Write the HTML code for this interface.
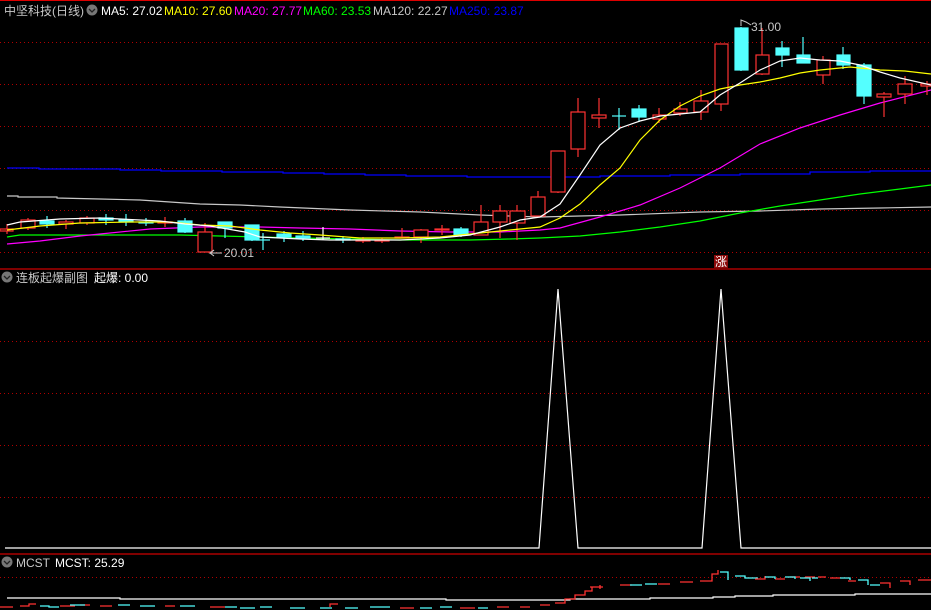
<!DOCTYPE html>
<html><head><meta charset="utf-8"><style>
html,body{margin:0;padding:0;background:#000;width:931px;height:610px;overflow:hidden}
svg{display:block}
text{font-family:"Liberation Sans","Noto Sans CJK SC",sans-serif;font-size:12px}
</style></head><body>
<svg width="931" height="610" viewBox="0 0 931 610" xmlns="http://www.w3.org/2000/svg">
<rect width="931" height="610" fill="#000"/>
<line x1="0" y1="0.5" x2="931" y2="0.5" stroke="#d00" stroke-width="1"/>
<!-- grid -->
<g stroke="#b00000" stroke-width="1" stroke-dasharray="1,3">
<line x1="0" y1="42.5" x2="931" y2="42.5"/>
<line x1="0" y1="84.5" x2="931" y2="84.5"/>
<line x1="0" y1="126.5" x2="931" y2="126.5"/>
<line x1="0" y1="168.5" x2="931" y2="168.5"/>
<line x1="0" y1="210.5" x2="931" y2="210.5"/>
<line x1="0" y1="252.5" x2="931" y2="252.5"/>
<line x1="0" y1="341.5" x2="931" y2="341.5"/>
<line x1="0" y1="393.5" x2="931" y2="393.5"/>
<line x1="0" y1="445.5" x2="931" y2="445.5"/>
<line x1="0" y1="497.5" x2="931" y2="497.5"/>
<line x1="0" y1="577.5" x2="931" y2="577.5"/>
</g>
<line x1="0" y1="269" x2="931" y2="269" stroke="#c00" stroke-width="1.2"/>
<line x1="0" y1="554" x2="931" y2="554" stroke="#c00" stroke-width="1.2"/>

<!-- blue MA250 -->
<polyline fill="none" stroke="#0000ff" stroke-width="1.3" points="7,168 39,168 39,169 120,169 120,170 161,170 161,171 222,171 222,172 283,172 283,173 324,173 324,174 365,174 365,175 406,175 406,176 467,176 467,177 600,177 600,176 670,176 670,175 740,175 740,174 810,174 810,172 870,172 870,171 931,171"/>
<!-- grey MA120 -->
<polyline fill="none" stroke="#c8c8c8" stroke-width="1.2" points="7,196 18,196 18,197 57,197 57,198 100,199 140,200 200,204 240,205 280,207 350,210 420,212 480,215 540,217 620,215 700,212 760,211 820,209 880,208 931,207"/>
<!-- green MA60 -->
<polyline fill="none" stroke="#00ff00" stroke-width="1.2" points="7,237 20,235 180,235 260,237 300,238 400,240 470,240 510,239 540,238 580,236 620,232 660,227 700,221 740,213 780,206 820,200 860,194 900,189 931,185"/>
<!-- magenta MA20 -->
<polyline fill="none" stroke="#ff00ff" stroke-width="1.2" points="7,244 40,241 80,236 100,234 150,229 175,228 200,227 260,227 300,228 350,229 400,231 450,232 500,232 540,230 560,228 600,217 640,205 680,188 720,168 760,144 800,128 840,115 880,103 931,90"/>

<!-- candles -->
<g stroke-width="1.2">
<!-- red hollow -->
<g stroke="#ff3232" fill="#000">
<line x1="7" y1="224" x2="7" y2="234"/><rect x="0" y="229" width="13" height="2"/>
<line x1="28" y1="218" x2="28" y2="230"/><rect x="21" y="220" width="14" height="8"/>
<line x1="66" y1="220" x2="66" y2="229"/><rect x="59" y="222" width="14" height="2"/>
<line x1="87" y1="216" x2="87" y2="225"/><rect x="80" y="218" width="14" height="5"/>
<line x1="165" y1="217" x2="165" y2="227"/><rect x="158" y="222" width="14" height="1"/>
<line x1="205" y1="223" x2="205" y2="252"/><rect x="198" y="232" width="14" height="20"/>
<line x1="363" y1="237" x2="363" y2="243"/><rect x="356" y="240" width="14" height="1"/>
<line x1="382" y1="238" x2="382" y2="243"/><rect x="375" y="240" width="14" height="1"/>
<line x1="402" y1="228" x2="402" y2="238"/><rect x="395" y="237" width="14" height="1"/>
<line x1="421" y1="229" x2="421" y2="243"/><rect x="414" y="230" width="14" height="7"/>
<line x1="442" y1="225" x2="442" y2="235"/><rect x="435" y="229" width="14" height="1"/>
<line x1="481" y1="205" x2="481" y2="235"/><rect x="474" y="222" width="14" height="13"/>
<line x1="500" y1="205" x2="500" y2="238"/><rect x="493" y="211" width="14" height="11"/>
<line x1="517" y1="205" x2="517" y2="240"/><rect x="510" y="211" width="15" height="12"/>
<line x1="538" y1="191" x2="538" y2="216"/><rect x="531" y="197" width="14" height="19"/>
<line x1="558" y1="151" x2="558" y2="193"/><rect x="551" y="151" width="14" height="41"/>
<line x1="578" y1="98" x2="578" y2="157"/><rect x="571" y="112" width="14" height="37"/>
<line x1="599" y1="98" x2="599" y2="128"/><rect x="592" y="115" width="14" height="3"/>
<line x1="659" y1="108" x2="659" y2="123"/><rect x="653" y="115" width="13" height="4"/>
<line x1="680" y1="102" x2="680" y2="116"/><rect x="674" y="109" width="13" height="4"/>
<line x1="701" y1="90" x2="701" y2="120"/><rect x="694" y="101" width="14" height="11"/>
<line x1="721" y1="44" x2="721" y2="111"/><rect x="715" y="44" width="13" height="60"/>
<line x1="762" y1="28" x2="762" y2="75"/><rect x="756" y="55" width="13" height="19"/>
<line x1="823" y1="56" x2="823" y2="84"/><rect x="817" y="60" width="13" height="15"/>
<line x1="884" y1="92" x2="884" y2="117"/><rect x="877" y="94" width="14" height="3"/>
<line x1="905" y1="76" x2="905" y2="104"/><rect x="898" y="84" width="14" height="10"/>
<line x1="927" y1="81" x2="927" y2="95"/><rect x="921" y="84" width="12" height="2"/>
</g>
<!-- cyan filled -->
<g stroke="#54ffff" fill="#54ffff">
<line x1="47" y1="216" x2="47" y2="228"/><rect x="40" y="221" width="14" height="3"/>
<line x1="106" y1="214" x2="106" y2="225"/><rect x="99" y="218" width="14" height="2"/>
<line x1="126" y1="214" x2="126" y2="226"/><rect x="119" y="220" width="14" height="2"/>
<line x1="146" y1="218" x2="146" y2="226"/><rect x="139" y="222" width="14" height="1"/>
<line x1="185" y1="218" x2="185" y2="233"/><rect x="178" y="221" width="14" height="11"/>
<line x1="225" y1="222" x2="225" y2="238"/><rect x="218" y="222" width="14" height="6"/>
<line x1="252" y1="225" x2="252" y2="241"/><rect x="245" y="225" width="14" height="15"/>
<line x1="263" y1="233" x2="263" y2="250"/><line x1="256" y1="240" x2="270" y2="240"/>
<line x1="284" y1="231" x2="284" y2="242"/><rect x="277" y="234" width="14" height="3"/>
<line x1="303" y1="231" x2="303" y2="241"/><rect x="296" y="236" width="14" height="2"/>
<line x1="343" y1="236" x2="343" y2="243"/><rect x="336" y="239" width="14" height="1"/>
<line x1="461" y1="227" x2="461" y2="237"/><rect x="454" y="229" width="14" height="6"/>
<line x1="619" y1="108" x2="619" y2="130"/><line x1="612" y1="116" x2="626" y2="116"/>
<line x1="639" y1="105" x2="639" y2="122"/><rect x="632" y="109" width="14" height="8"/>
<line x1="741" y1="27" x2="741" y2="71"/><rect x="735" y="28" width="13" height="42"/>
<line x1="782" y1="41" x2="782" y2="67"/><rect x="776" y="48" width="13" height="7"/>
<line x1="803" y1="37" x2="803" y2="63"/><rect x="797" y="55" width="13" height="8"/>
<line x1="843" y1="47" x2="843" y2="69"/><rect x="837" y="55" width="13" height="10"/>
<line x1="864" y1="63" x2="864" y2="104"/><rect x="857" y="65" width="14" height="31"/>
</g>
<line x1="323" y1="227" x2="323" y2="240" stroke="#fff"/><line x1="316" y1="238" x2="330" y2="238" stroke="#fff"/>
</g>

<!-- yellow MA10 -->
<polyline fill="none" stroke="#ffff00" stroke-width="1.2" points="7,230 40,226 80,223 130,222 170,222 200,225 230,226 260,230 290,233 320,235 360,238 400,238 440,237 480,233 510,230 540,227 560,218 580,204 600,185 620,168 640,140 660,120 680,106 700,96 720,89 740,85 760,82 780,78 800,73 820,70 850,67 880,70 905,71 931,74"/>
<!-- white MA5 -->
<polyline fill="none" stroke="#ffffff" stroke-width="1.2" points="7,225 20,222 60,219 100,218 160,221 185,224 210,226 245,232 260,237 300,239 330,240 360,240 400,240 440,238 470,235 500,227 520,220 540,217 560,204 580,175 600,145 620,128 640,121 660,116 680,114 700,112 720,95 740,83 760,70 780,61 800,58 820,60 840,61 860,65 880,72 900,78 931,85"/>

<!-- labels on chart -->
<g fill="#c8c8c8" stroke="none">
<text x="751" y="31">31.00</text>
<text x="224" y="257">20.01</text>
</g>
<polyline points="741,26 741,20 746,22 751,25" fill="none" stroke="#c8c8c8" stroke-width="1"/>
<polyline points="222,253 210,253 214,250 M" fill="none" stroke="#c8c8c8" stroke-width="1"/>
<polyline points="214,250 210,253 214,256" fill="none" stroke="#c8c8c8" stroke-width="1"/>
<rect x="714" y="255" width="14" height="13" fill="#8b0a0a"/>
<text x="715" y="266" fill="#fff" font-size="11">涨</text>

<!-- header -->
<text x="4" y="15" fill="#c8c8c8" font-size="13">中坚科技(日线)</text>
<circle cx="92" cy="10" r="5.5" fill="#777"/>
<polyline points="89,9 92,12 95,9" fill="none" stroke="#222" stroke-width="1.3"/>
<text x="101" y="15" fill="#fff">MA5: 27.02</text>
<text x="164" y="15" fill="#ffff00">MA10: 27.60</text>
<text x="234" y="15" fill="#ff00ff">MA20: 27.77</text>
<text x="303" y="15" fill="#00ff00">MA60: 23.53</text>
<text x="373" y="15" fill="#c8c8c8">MA120: 22.27</text>
<text x="449" y="15" fill="#0000ff">MA250: 23.87</text>

<!-- sub chart -->
<circle cx="7" cy="277" r="5.5" fill="#777"/>
<polyline points="4,276 7,279 10,276" fill="none" stroke="#222" stroke-width="1.3"/>
<text x="16" y="282" fill="#c8c8c8" font-size="13">连板起爆副图</text>
<text x="94" y="282" fill="#fff" font-size="13">起爆: 0.00</text>
<polyline fill="none" stroke="#fff" stroke-width="1.2" points="5,548 539,548 558,289 578,548 702,548 721,289 741,548 931,548"/>

<!-- MCST -->
<circle cx="7" cy="562" r="5.5" fill="#777"/>
<polyline points="4,561 7,564 10,561" fill="none" stroke="#222" stroke-width="1.3"/>
<text x="16" y="567" fill="#c8c8c8" font-size="12">MCST</text>
<text x="55" y="567" fill="#fff" font-size="12">MCST: 25.29</text>
<polyline fill="none" stroke="#fff" stroke-width="1.2" points="7,598 120,598 120,599 446,599 446,600 570,600 570,599 650,599 650,598 713,598 713,597 735,597 735,596 773,596 773,595 855,595 855,594 931,594"/>
<g stroke-width="1.3" fill="none">
<path stroke="#ff3232" d="M0,607h13M20,606h9v-2h7M60,606h15M80,605h10M100,606h12M165,606h10M210,607h15M330,607v-3h8M400,608h14M460,608h15M497,607h12M520,607h10M540,605h10M555,603h10v-4h10v-4h10v-4h7v-4M590,587h13M600,585v4M620,585h12M658,584h12M680,582h13M700,581h12v-7h6v-4"/>
<path stroke="#54ffff" d="M40,606h9v1h10M70,605h15M118,605h12M140,606h15M180,606h15M225,607h12M240,608h15M260,607h12M290,608h15M320,608h12M345,608h13M370,607h12M380,607h10M420,608h12M440,607h12M478,608h10M620,585M630,585h12M645,584h12M720,572h8v8M735,576h10v2h7M748,578h10"/>
<path stroke="#ff3232" d="M755,579h10v-3M775,579h10M790,577h10M805,577h10M818,577h8M830,578h10M848,581h8M880,583h10v5M900,581h10v4M918,580h13"/>
<path stroke="#54ffff" d="M765,577h10v2M785,577h10v2M800,578h10v3M812,578h6M840,578h10v2M858,580h10v5M870,585h10"/>
</g>
</svg>
</body></html>
